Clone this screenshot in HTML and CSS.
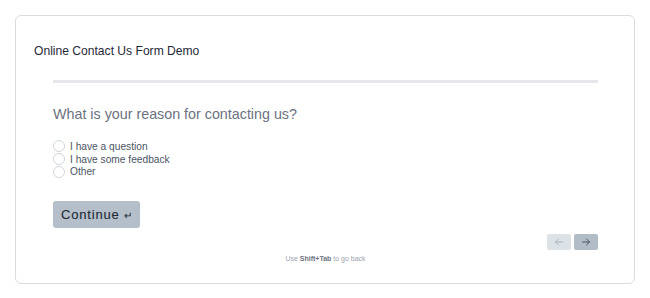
FILE: index.html
```html
<!DOCTYPE html>
<html>
<head>
<meta charset="utf-8">
<link rel="stylesheet" href="styles.css">
</head>
<body>
<div class="card">
  <h1 class="title">Online Contact Us Form Demo</h1>
  <div class="content">
    <div class="progress"></div>
    <h2 class="question">What is your reason for contacting us?</h2>
    <div class="options">
      <label class="option"><span class="radio"></span>I have a question</label>
      <label class="option"><span class="radio"></span>I have some feedback</label>
      <label class="option"><span class="radio"></span>Other</label>
    </div>
    <button class="continue">Continue <span class="enter">↵</span></button>
    <div class="nav">
      <button class="navbtn prev"><svg width="10" height="10" viewBox="0 0 10 10"><path d="M8.5 5H1.5M4.5 2L1.5 5L4.5 8" fill="none" stroke="currentColor" stroke-width="1" stroke-linecap="round" stroke-linejoin="round"/></svg></button>
      <button class="navbtn next"><svg width="10" height="10" viewBox="0 0 10 10"><path d="M1.5 5H8.5M5.5 2L8.5 5L5.5 8" fill="none" stroke="currentColor" stroke-width="1" stroke-linecap="round" stroke-linejoin="round"/></svg></button>
    </div>
    <p class="hint">Use <b>Shift+Tab</b> to go back</p>
  </div>
</div>
</body>
</html>
```
FILE: styles.css
```css
* { box-sizing: border-box; }
html, body { margin: 0; background: #fff; }
body {
  padding: 15px 16px 15px 15px;
  font-family: "Liberation Sans", Arial, sans-serif;
}
.card {
  width: 620px;
  height: 269px;
  border: 1px solid #dcdcdc;
  border-radius: 6px;
  padding: 27px 36px 0 18px;
  display: flex;
  flex-direction: column;
}
.title {
  margin: 0;
  font-size: 12.1px;
  font-weight: 400;
  color: #1f2937;
  line-height: 16px;
}
.content {
  padding-left: 19px;
  display: flex;
  flex-direction: column;
}
.progress {
  margin-top: 21px;
  height: 3px;
  background: #e5e7eb;
}
.question {
  margin: 22px 0 0;
  font-size: 14.3px;
  font-weight: 400;
  color: #6b7280;
  line-height: 18px;
}
.options {
  margin-top: 17px;
  display: flex;
  flex-direction: column;
}
.option {
  display: flex;
  align-items: center;
  height: 12.7px;
  font-size: 10.2px;
  color: #4b5563;
}
.radio {
  width: 12px;
  height: 12px;
  border: 1px solid #d1d5db;
  border-radius: 50%;
  margin-right: 5px;
}
.continue {
  margin-top: 23px;
  align-self: flex-start;
  width: 87px;
  height: 27px;
  border: none;
  border-radius: 3px;
  background: #b4bfc9;
  font-family: "Liberation Sans", Arial, sans-serif;
  font-size: 13px;
  font-weight: 400;
  letter-spacing: 0.8px;
  color: #1f2937;
  padding: 0;
  -webkit-text-stroke: 0.1px #1f2937;
}
.enter { font-size: 10px; letter-spacing: 0; }
.nav {
  margin-top: 6px;
  display: flex;
  justify-content: flex-end;
  gap: 3px;
}
.navbtn {
  width: 24px;
  height: 16px;
  border: none;
  border-radius: 2px;
  padding: 0;
  display: flex;
  align-items: center;
  justify-content: center;
}
.prev { background: #dde2e6; color: #aab4bd; }
.next { background: #b1bcc6; color: #4b5563; }
.hint {
  margin: 3px 0 0;
  text-align: center;
  font-size: 7px;
  color: #9ca3af;
  line-height: 12px;
}
.hint b { color: #6b7280; font-weight: 700; }
```
